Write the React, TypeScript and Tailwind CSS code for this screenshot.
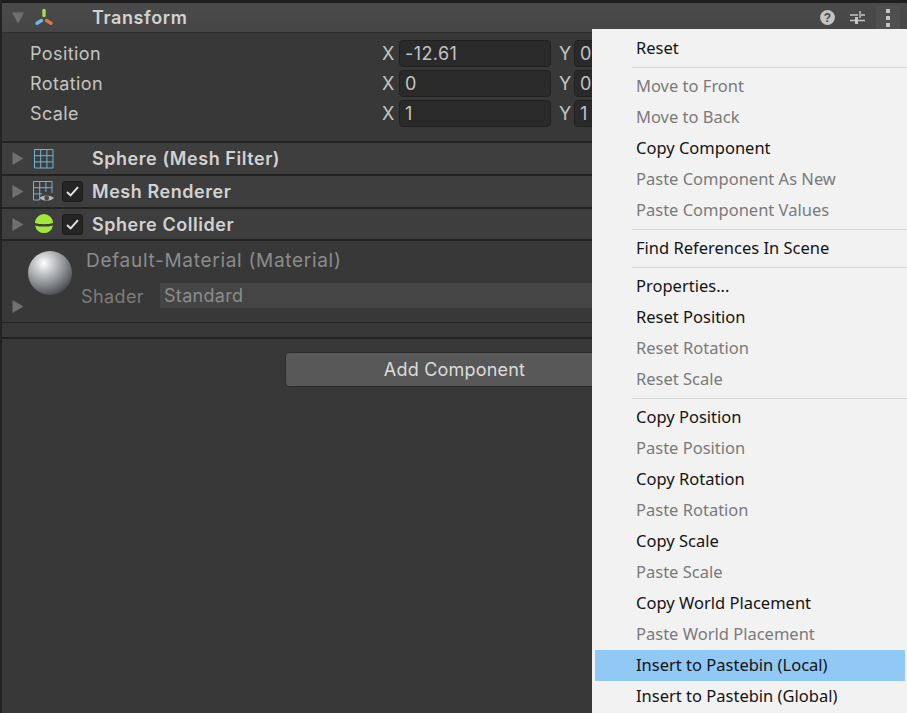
const menu: ([string, boolean] | null)[] = [
  ['Reset', true],
  null,
  ['Move to Front', false],
  ['Move to Back', false],
  ['Copy Component', true],
  ['Paste Component As New', false],
  ['Paste Component Values', false],
  null,
  ['Find References In Scene', true],
  null,
  ['Properties...', true],
  ['Reset Position', true],
  ['Reset Rotation', false],
  ['Reset Scale', false],
  null,
  ['Copy Position', true],
  ['Paste Position', false],
  ['Copy Rotation', true],
  ['Paste Rotation', false],
  ['Copy Scale', true],
  ['Paste Scale', false],
  ['Copy World Placement', true],
  ['Paste World Placement', false],
  ['Insert to Pastebin (Local)', true],
  ['Insert to Pastebin (Global)', true]
]

const TransformIcon = () => (
  <svg width="20" height="20" viewBox="0 0 20 20" fill="none" strokeWidth="3.4" strokeLinecap="round">
    <path d="M10 2.5V7.5" stroke="#a3e04a" />
    <path d="M7.5 12.5L3 15.2" stroke="#6cb8ea" />
    <path d="M12.5 12.5L17 15.2" stroke="#e0744a" />
  </svg>
)

const GridIcon = () => (
  <svg width="20" height="20" viewBox="0 0 20 20" fill="none" stroke="#6fb4d4" strokeWidth="1">
    <path d="M.5.5h18.5v18.5H.5zM.5 6.7H19M.5 12.9H19M6.7.5V19M12.9.5V19" />
  </svg>
)

const RendererIcon = () => (
  <svg width="22" height="22" viewBox="0 0 22 22" fill="none">
    <path d="M.5.5h18.5v11.5M.5.5v18.5h6M.5 6.7H19M.5 12.9H9M6.7.5V19M12.9.5V11" stroke="#6fb4d4" />
    <path d="M6.5 17C9 13.6 18 13.6 21 17C18 20.4 9 20.4 6.5 17Z" fill="#b8b8b8" />
    <circle cx="13.7" cy="17" r="2.4" fill="#4a4a4a" />
  </svg>
)

const ColliderIcon = () => (
  <svg width="20" height="20" viewBox="0 0 20 20">
    <path d="M1 9A9 9 0 0 1 19 9C14 10.6 6 10.6 1 9Z" fill="#a3e63c" />
    <path d="M1.1 11.4C6 13 14 13 18.9 11.4A9 9 0 0 1 1.1 11.4Z" fill="#a3e63c" />
  </svg>
)

const Sphere = () => (
  <svg width="44" height="44" viewBox="0 0 44 44">
    <defs>
      <radialGradient id="ball" cx="0.36" cy="0.28" r="0.8">
        <stop offset="0" stopColor="#ffffff" />
        <stop offset="0.22" stopColor="#d2d3d5" />
        <stop offset="0.6" stopColor="#8b8e92" />
        <stop offset="1" stopColor="#404143" />
      </radialGradient>
    </defs>
    <circle cx="22" cy="22" r="22" fill="url(#ball)" />
  </svg>
)

const Arrow = ({ down }: { down?: boolean }) => (
  <svg width="12" height="13" viewBox="0 0 12 13" fill="#707070">
    {down ? <path d="M0 1.5H12L6 12.5Z" /> : <path d="M.5 0L11.5 6.5L.5 13Z" />}
  </svg>
)

const Check = () => (
  <div className="flex items-center justify-center w-[21px] h-[21px] rounded-[3px] bg-[#252525] border border-[#1c1c1c]">
    <svg width="13" height="11" viewBox="0 0 13 11" fill="none" stroke="#e4e4e4" strokeWidth="2">
      <path d="M1 6L4.6 9.4L12 1.2" />
    </svg>
  </div>
)

const Field = ({ value, label }: { value: string; label: string }) => (
  <div className="flex items-center h-[30px] pl-[28px] text-[18px] tracking-[0.4px] text-[#c4c4c4]">
    <span className="w-[352px]">{label}</span>
    <span className="w-[17px]">X</span>
    <div className="flex items-center w-[152px] h-[27px] pl-[5px] bg-[#2a2a2a] border border-[#212121] rounded-[4px]">{value}</div>
    <span className="ml-[8px] w-[15px]">Y</span>
    <div className="flex items-center w-[100px] h-[27px] pl-[5px] bg-[#2a2a2a] border border-[#212121] rounded-[4px]">{value === '-12.61' ? '0' : value}</div>
  </div>
)

const Section = ({ icon, title, checked, className }: { icon: React.ReactNode; title: string; checked?: boolean; className: string }) => (
  <div className={`flex items-center pl-[10px] bg-[#3e3e3e] border-b-2 border-[#232323] ${className}`}>
    <Arrow />
    <div className="flex justify-center w-[32px] ml-[4px]">{icon}</div>
    <div className="w-[30px] ml-[2px] flex">{checked && <Check />}</div>
    <span className="text-[18px] font-semibold tracking-[0.55px] text-[#d2d2d2]">{title}</span>
  </div>
)

export default function App() {
  return (
    <div className="relative w-[907px] h-[713px] overflow-hidden bg-[#383838] font-['Inter',sans-serif] border-l-2 border-[#232323]">
      <div className="h-[3px] bg-[#1e1e1e] ml-[-2px]" />
      <div className="flex items-center h-[30px] pl-[10px] bg-gradient-to-b from-[#4a4a4a] to-[#464646] border-b border-[#303030]">
        <Arrow down />
        <div className="flex justify-center w-[32px] ml-[4px]"><TransformIcon /></div>
        <span className="ml-[32px] text-[18px] font-semibold tracking-[0.6px] text-[#d2d2d2]">Transform</span>
        <div className="flex items-center ml-auto mr-[7px] h-[29px]">
          <svg width="15" height="15" viewBox="0 0 15 15">
            <circle cx="7.5" cy="7.5" r="7.4" fill="#c4c4c4" />
            <text x="7.5" y="12" textAnchor="middle" fontSize="12" fontWeight="700" fill="#464646" fontFamily="Liberation Sans">?</text>
          </svg>
          <svg className="ml-[15px]" width="16" height="15" viewBox="0 0 16 15" fill="none" stroke="#c4c4c4" strokeWidth="1.4">
            <path d="M0 5H8M11 5H15M10 1V8M0 10.5H5M8 10.5H15" />
            <path d="M6.5 7V14" strokeWidth="3" />
          </svg>
          <div className="flex flex-col items-center justify-center gap-[3px] w-[24px] h-[24px] ml-[10px] bg-[#4f4f4f]">
            <div className="w-[4px] h-[4px] bg-[#c4c4c4]" />
            <div className="w-[4px] h-[4px] bg-[#c4c4c4]" />
            <div className="w-[4px] h-[4px] bg-[#c4c4c4]" />
          </div>
        </div>
      </div>
      <div className="pt-[5px] pb-[13px] border-b-2 border-[#232323]">
        <Field label="Position" value="-12.61" />
        <Field label="Rotation" value="0" />
        <Field label="Scale" value="1" />
      </div>
      <Section className="h-[33px]" icon={<GridIcon />} title="Sphere (Mesh Filter)" />
      <Section className="h-[33px]" icon={<RendererIcon />} title="Mesh Renderer" checked />
      <Section className="h-[32px]" icon={<ColliderIcon />} title="Sphere Collider" checked />
      <div className="relative h-[82px] border-b border-[#232323]">
        <div className="absolute left-[26px] top-[10px]"><Sphere /></div>
        <div className="absolute left-[10px] top-[59px]"><Arrow /></div>
        <div className="absolute left-[84px] top-[6px] text-[19px] tracking-[0.7px] text-[#8c8c8c]">Default-Material (Material)</div>
        <div className="absolute left-[79px] top-[42px] text-[18px] tracking-[0.4px] text-[#7c7c7c]">Shader</div>
        <div className="absolute left-[158px] top-[42px] flex items-center w-[440px] h-[25px] pl-[4px] bg-[#454545] text-[18px] tracking-[0.3px] text-[#8c8c8c]">Standard</div>
      </div>
      <div className="h-[16px] border-b-2 border-[#232323]" />
      <div className="flex justify-center pt-[13px]">
        <div className="flex items-center justify-center w-[340px] h-[35px] rounded-[4px] bg-[#585858] border border-[#2c2c2c] text-[18px] tracking-[0.2px] text-[#dcdcdc]">Add Component</div>
      </div>
      <div className="absolute left-[590px] top-[29px] w-[315px] pt-[4px] pb-[8px] pl-[3px] pr-[2px] bg-[#f2f2f2] font-['Noto_Sans',sans-serif] text-[16.5px]">
        {menu.map((item, i) =>
          item === null ? (
            <div key={i} className="h-[7px] flex items-center ml-[37px] mr-[-2px]">
              <div className="w-full h-px bg-[#d7d7d7]" />
            </div>
          ) : (
            <div
              key={i}
              className={`flex items-center h-[31px] pl-[41px] ${item[1] ? 'text-[#141414]' : 'text-[#7a7a7a]'} ${item[0] === 'Insert to Pastebin (Local)' ? 'bg-[#90c8f6]' : ''}`}
            >
              {item[0]}
            </div>
          )
        )}
      </div>
    </div>
  )
}
